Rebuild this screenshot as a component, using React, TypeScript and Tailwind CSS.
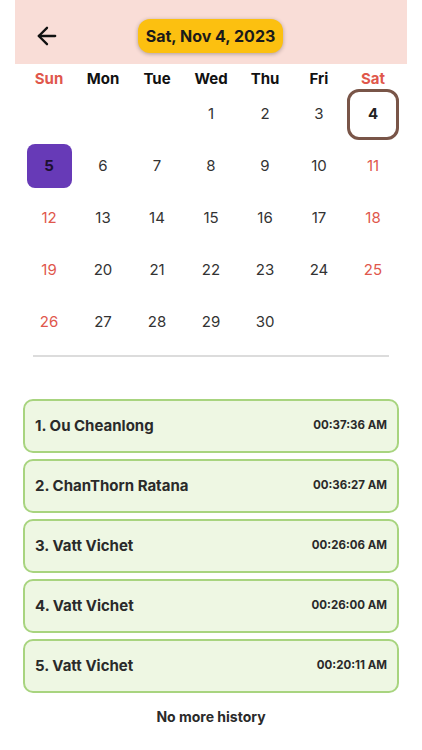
import { ArrowLeft } from "lucide-react";

const WEEKDAYS = ["Sun", "Mon", "Tue", "Wed", "Thu", "Fri", "Sat"];

const HISTORY = [
  { name: "1. Ou Cheanlong", time: "00:37:36 AM" },
  { name: "2. ChanThorn Ratana", time: "00:36:27 AM" },
  { name: "3. Vatt Vichet", time: "00:26:06 AM" },
  { name: "4. Vatt Vichet", time: "00:26:00 AM" },
  { name: "5. Vatt Vichet", time: "00:20:11 AM" },
];

// November 2023 starts on a Wednesday
const days: (number | null)[] = [null, null, null, ...Array.from({ length: 30 }, (_, i) => i + 1)];

function DayCell({ day, index }: { day: number | null; index: number }) {
  if (day === null) return <div className="h-[52px]" />;
  const weekend = index % 7 === 0 || index % 7 === 6;

  if (day === 4) {
    return (
      <div className="h-[52px] flex items-center justify-center">
        <div className="w-[52px] h-[51px] rounded-[12px] border-[3px] border-[#795548] flex items-center justify-center text-[15px] font-bold text-[#222]">
          {day}
        </div>
      </div>
    );
  }
  if (day === 5) {
    return (
      <div className="h-[52px] flex items-center justify-center">
        <div className="w-[45px] h-[44px] rounded-[8px] bg-[#673ab7] flex items-center justify-center text-[15px] font-bold text-[#1c1030]">
          {day}
        </div>
      </div>
    );
  }
  return (
    <div
      className={`h-[52px] flex items-center justify-center text-[15px] ${
        weekend ? "text-[#e0574c]" : "text-[#333]"
      }`}
    >
      {day}
    </div>
  );
}

export default function App() {
  return (
    <div className="w-[422px] min-h-[750px] bg-white font-['Inter',sans-serif]">
      {/* Header */}
      <div className="px-[15px]">
        <div className="h-[64px] bg-[#f9ddd7] flex items-center relative">
          <button className="ml-[18px] mt-[7px] text-[#111]">
            <ArrowLeft className="w-[28px] h-[28px]" strokeWidth={2} />
          </button>
          <div className="absolute left-[123px] top-[19px] w-[145px] h-[34px] rounded-[12px] bg-[#fcc010] shadow-[0_1px_4px_rgba(0,0,0,0.3)] flex items-center justify-center text-[16px] font-bold text-[#1a1a1a]">
            Sat, Nov 4, 2023
          </div>
        </div>
      </div>

      {/* Calendar */}
      <div className="px-[22px] grid grid-cols-7">
        {WEEKDAYS.map((d, i) => (
          <div
            key={d}
            className={`h-[24px] flex items-end justify-center leading-[18px] text-[15px] font-bold ${
              i === 0 || i === 6 ? "text-[#e0574c]" : "text-[#111]"
            }`}
          >
            {d}
          </div>
        ))}
        {days.map((d, i) => (
          <DayCell key={i} day={d} index={i} />
        ))}
      </div>

      <div className="mx-[33px] mt-[7px] h-[2px] bg-[#dcdcdc]" />

      {/* History */}
      <div className="mt-[42px] px-[23px] flex flex-col gap-[6px]">
        {HISTORY.map((h) => (
          <div
            key={h.name + h.time}
            className="h-[54px] rounded-[10px] border-2 border-[#a8d47f] bg-[#eef7e3] flex items-center justify-between pl-[10px] pr-[10px]"
          >
            <span className="text-[15px] font-bold text-[#2a2a2a]">{h.name}</span>
            <span className="text-[11.5px] font-bold text-[#2a2a2a]">{h.time}</span>
          </div>
        ))}
      </div>

      <div className="mt-[13px] text-center text-[14px] font-bold text-[#2a2a2a]">No more history</div>
    </div>
  );
}
